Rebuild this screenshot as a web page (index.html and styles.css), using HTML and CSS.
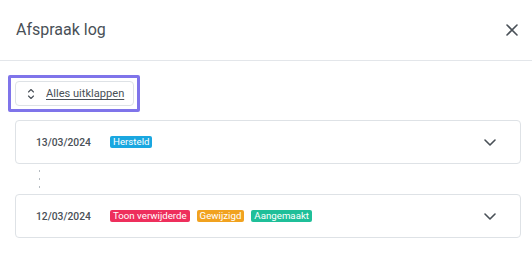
FILE: index.html
```html
<!DOCTYPE html>
<html lang="nl">
<head>
<meta charset="utf-8">
<title>Afspraak log</title>
<link rel="stylesheet" href="styles.css">
</head>
<body>
<div class="modal">
  <header class="modal-header">
    <h1 class="modal-title">Afspraak log</h1>
    <button class="close-btn" aria-label="Sluiten">
      <svg width="12" height="12" viewBox="0 0 12 12"><path d="M1 1L11 11M11 1L1 11" stroke="#495057" stroke-width="1.6" fill="none" stroke-linecap="round"/></svg>
    </button>
  </header>
  <main class="modal-body">
    <button class="expand-btn">
      <svg class="expand-icon" width="8" height="12" viewBox="0 0 8 12"><path d="M1.5 4L4 1.5L6.5 4M1.5 8L4 10.5L6.5 8" stroke="#495057" stroke-width="1.1" fill="none" stroke-linecap="round" stroke-linejoin="round"/></svg>
      <span class="expand-label">Alles uitklappen</span>
    </button>
    <div class="log-card">
      <span class="log-date">13/03/2024</span>
      <div class="badges">
        <span class="badge badge-blue">Hersteld</span>
      </div>
      <svg class="chevron" width="12" height="7" viewBox="0 0 12 7"><path d="M1 1L6 6L11 1" stroke="#495057" stroke-width="1.6" fill="none" stroke-linecap="round" stroke-linejoin="round"/></svg>
    </div>
    <div class="connector"></div>
    <div class="log-card">
      <span class="log-date">12/03/2024</span>
      <div class="badges">
        <span class="badge badge-red">Toon verwijderde</span>
        <span class="badge badge-orange">Gewijzigd</span>
        <span class="badge badge-green">Aangemaakt</span>
      </div>
      <svg class="chevron" width="12" height="7" viewBox="0 0 12 7"><path d="M1 1L6 6L11 1" stroke="#495057" stroke-width="1.6" fill="none" stroke-linecap="round" stroke-linejoin="round"/></svg>
    </div>
  </main>
</div>
</body>
</html>
```
FILE: styles.css
```css
* { box-sizing: border-box; }
html, body {
  margin: 0;
  padding: 0;
  background: #fff;
  font-family: Roboto, "Liberation Sans", sans-serif;
  color: #495057;
}
.modal { width: 532px; }
.modal-header {
  height: 61px;
  border-bottom: 1px solid #e3e6ea;
  display: flex;
  align-items: center;
  justify-content: space-between;
  padding: 0 14px 0 16px;
}
.modal-title {
  margin: 0;
  font-size: 16px;
  font-weight: 400;
  color: #495057;
  padding-bottom: 1px;
}
.close-btn {
  border: 0;
  background: none;
  padding: 0;
  width: 12px;
  height: 12px;
  display: flex;
  cursor: pointer;
}
.modal-body {
  padding: 20px 11px 0 15px;
}
.expand-btn {
  position: relative;
  display: inline-flex;
  align-items: center;
  height: 25px;
  padding: 0 9px 0 11px;
  border: 1px solid #dee2e6;
  border-radius: 4px;
  background: #fff;
  font-family: inherit;
  font-size: 11.1px;
  color: #495057;
  margin-bottom: 14px;
  cursor: pointer;
}
.expand-btn::after {
  content: "";
  position: absolute;
  top: -7px;
  left: -8px;
  right: -7px;
  bottom: -7px;
  border: 3px solid #7f74ea;
  border-radius: 2px;
  pointer-events: none;
}
.expand-icon { margin-right: 11px; }
.expand-label { text-decoration: underline; text-underline-offset: 2px; }
.log-card {
  height: 44px;
  border: 1px solid #dee2e6;
  border-radius: 4px;
  display: flex;
  align-items: center;
  padding: 0 24px 0 20px;
}
.log-date {
  font-size: 10.3px;
  font-weight: 500;
  color: #495057;
  width: 74px;
}
.badges {
  display: flex;
  gap: 7px;
  flex: 1;
}
.badge {
  display: inline-block;
  height: 12px;
  line-height: 12px;
  font-size: 9.7px;
  color: #fff;
  padding: 0 3px;
  border-radius: 2px;
}
.badge-blue { background: #1aa7e0; }
.badge-red { background: #ee2f5c; }
.badge-orange { background: #f1a21f; }
.badge-green { background: #1fbf99; }
.chevron { display: block; }
.connector {
  width: 1px;
  height: 18px;
  margin: 6px 0 6px 24px;
  background: repeating-linear-gradient(to bottom, #b5bbc1 0 2px, transparent 2px 8px);
}
```
